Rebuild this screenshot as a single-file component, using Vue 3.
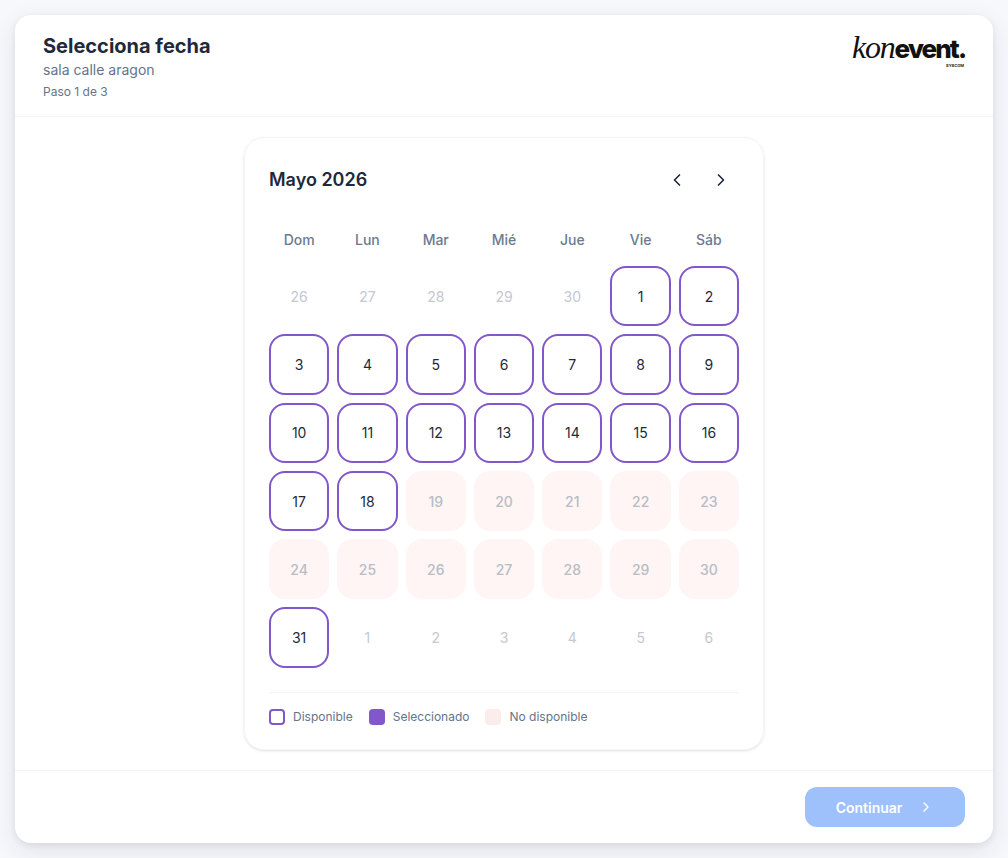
<template>
  <div class="page">
    <div class="shell">
      <header class="top">
        <div class="titles">
          <h1>Selecciona fecha</h1>
          <p class="room">sala calle aragon</p>
          <p class="step">Paso 1 de 3</p>
        </div>
        <div class="logo">
          <div class="logo-word"><span class="kon">kon</span><span class="event">event.</span></div>
          <div class="logo-sub">SYSCOM</div>
        </div>
      </header>

      <main class="body">
        <section class="calendar">
          <div class="cal-head">
            <h2>Mayo 2026</h2>
            <div class="nav">
              <button type="button" class="nav-btn">
                <svg width="20" height="20" viewBox="0 0 24 24"><path d="M15 18l-6-6 6-6" /></svg>
              </button>
              <button type="button" class="nav-btn">
                <svg width="20" height="20" viewBox="0 0 24 24"><path d="M9 18l6-6-6-6" /></svg>
              </button>
            </div>
          </div>

          <div class="weekdays">
            <span v-for="d in weekdays" :key="d">{{ d }}</span>
          </div>

          <div class="days">
            <div v-for="(c, i) in cells" :key="i" :class="['day', c.type]">{{ c.n }}</div>
          </div>

          <div class="legend">
            <div class="legend-item"><span class="swatch available"></span>Disponible</div>
            <div class="legend-item"><span class="swatch selected"></span>Seleccionado</div>
            <div class="legend-item"><span class="swatch blocked"></span>No disponible</div>
          </div>
        </section>
      </main>

      <footer class="bottom">
        <button type="button" class="next" disabled>
          Continuar
          <svg width="16" height="16" viewBox="0 0 24 24"><path d="M9 18l6-6-6-6" /></svg>
        </button>
      </footer>
    </div>
  </div>
</template>

<script setup>
const weekdays = ['Dom', 'Lun', 'Mar', 'Mié', 'Jue', 'Vie', 'Sáb']

const cells = []
for (const n of [26, 27, 28, 29, 30]) cells.push({ n, type: 'other' })
for (let n = 1; n <= 31; n++) {
  cells.push({ n, type: n <= 18 || n === 31 ? 'available' : 'blocked' })
}
for (let n = 1; n <= 6; n++) cells.push({ n, type: 'other' })
</script>

<style>
html,
body {
  margin: 0;
  background: #f7f8fc;
}
</style>

<style scoped>
.page {
  height: 858px;
  box-sizing: border-box;
  padding: 15px;
  font-family: Inter, "Liberation Sans", sans-serif;
  overflow: hidden;
}

.shell {
  height: 828px;
  display: flex;
  flex-direction: column;
  background: #fff;
  border-radius: 16px;
  box-shadow: 0 8px 24px rgba(30, 41, 59, 0.1), 0 2px 6px rgba(30, 41, 59, 0.08);
}

.top {
  height: 102px;
  box-sizing: border-box;
  padding: 19px 28px 0;
  display: flex;
  justify-content: space-between;
  border-bottom: 1px solid #f1f5f9;
}

h1 {
  margin: 0;
  font-size: 20px;
  line-height: 24px;
  font-weight: 700;
  color: #1e293b;
}

.room {
  margin: 2px 0 0;
  font-size: 14px;
  line-height: 20px;
  color: #64748b;
}

.step {
  margin: 4px 0 0;
  font-size: 12px;
  line-height: 16px;
  color: #64748b;
}

.logo {
  width: 113px;
  margin-top: -3px;
}

.logo-word {
  display: flex;
  align-items: baseline;
  color: #111;
  line-height: 32px;
}

.kon {
  font-family: "Liberation Serif", serif;
  font-style: italic;
  font-size: 32px;
  letter-spacing: -1.2px;
}

.event {
  font-family: Inter, sans-serif;
  font-weight: 800;
  font-size: 26px;
  letter-spacing: -1.9px;
}

.logo-sub {
  margin-top: -2px;
  padding-right: 1px;
  text-align: right;
  font-size: 4px;
  line-height: 5px;
  font-weight: 700;
  color: #222;
}

.body {
  flex: 1;
  display: flex;
  justify-content: center;
  padding-top: 20px;
}

.calendar {
  width: 520px;
  height: 613px;
  box-sizing: border-box;
  padding: 24px;
  border: 1px solid #f1f5f9;
  border-radius: 20px;
  box-shadow: 0 1px 3px rgba(0, 0, 0, 0.1), 0 1px 2px -1px rgba(0, 0, 0, 0.1);
}

.cal-head {
  height: 34px;
  display: flex;
  align-items: center;
  justify-content: space-between;
}

h2 {
  margin: 0;
  font-size: 18px;
  font-weight: 600;
  color: #1e293b;
}

.nav {
  display: flex;
  gap: 4px;
  margin-right: -2px;
}

.nav-btn {
  width: 40px;
  height: 34px;
  padding: 2px 0 0;
  display: flex;
  align-items: center;
  justify-content: center;
  background: none;
  border: none;
  color: #1e293b;
}

.nav-btn path,
.next path {
  fill: none;
  stroke: currentColor;
  stroke-width: 2;
  stroke-linecap: round;
  stroke-linejoin: round;
}

.weekdays {
  display: grid;
  grid-template-columns: repeat(7, 1fr);
  gap: 8px;
  margin-top: 23px;
  height: 40px;
  align-items: center;
  text-align: center;
  font-size: 14px;
  font-weight: 500;
  color: #6b7a90;
}

.days {
  display: grid;
  grid-template-columns: repeat(7, 1fr);
  gap: 8px;
  margin-top: 7px;
}

.day {
  aspect-ratio: 1;
  box-sizing: border-box;
  display: flex;
  align-items: center;
  justify-content: center;
  border-radius: 16px;
  font-size: 14px;
  font-weight: 500;
}

.day.available {
  border: 2px solid #8257c9;
  color: #1e293b;
  font-weight: 400;
}

.day.blocked {
  background: #fef5f4;
  color: #b8bcc6;
}

.day.other {
  color: #c3c8d3;
  font-weight: 400;
}

.legend {
  display: flex;
  gap: 16px;
  margin-top: 24px;
  padding-top: 16px;
  border-top: 1px solid #f1f5f9;
  font-size: 12px;
  color: #64748b;
}

.legend-item {
  display: flex;
  align-items: center;
  gap: 8px;
}

.swatch {
  width: 16px;
  height: 16px;
  box-sizing: border-box;
  border-radius: 4px;
}

.swatch.available {
  border: 2px solid #8257c9;
}

.swatch.selected {
  background: #8257c9;
}

.swatch.blocked {
  background: #fdecec;
}

.bottom {
  height: 73px;
  box-sizing: border-box;
  padding: 16px 28px 0;
  display: flex;
  justify-content: flex-end;
  border-top: 1px solid #f1f5f9;
}

.next {
  width: 160px;
  height: 40px;
  display: flex;
  align-items: center;
  justify-content: center;
  gap: 16px;
  padding: 0;
  border: none;
  border-radius: 12px;
  background: #9fc1fb;
  color: #fff;
  font-family: inherit;
  font-size: 14px;
  font-weight: 600;
}
</style>
